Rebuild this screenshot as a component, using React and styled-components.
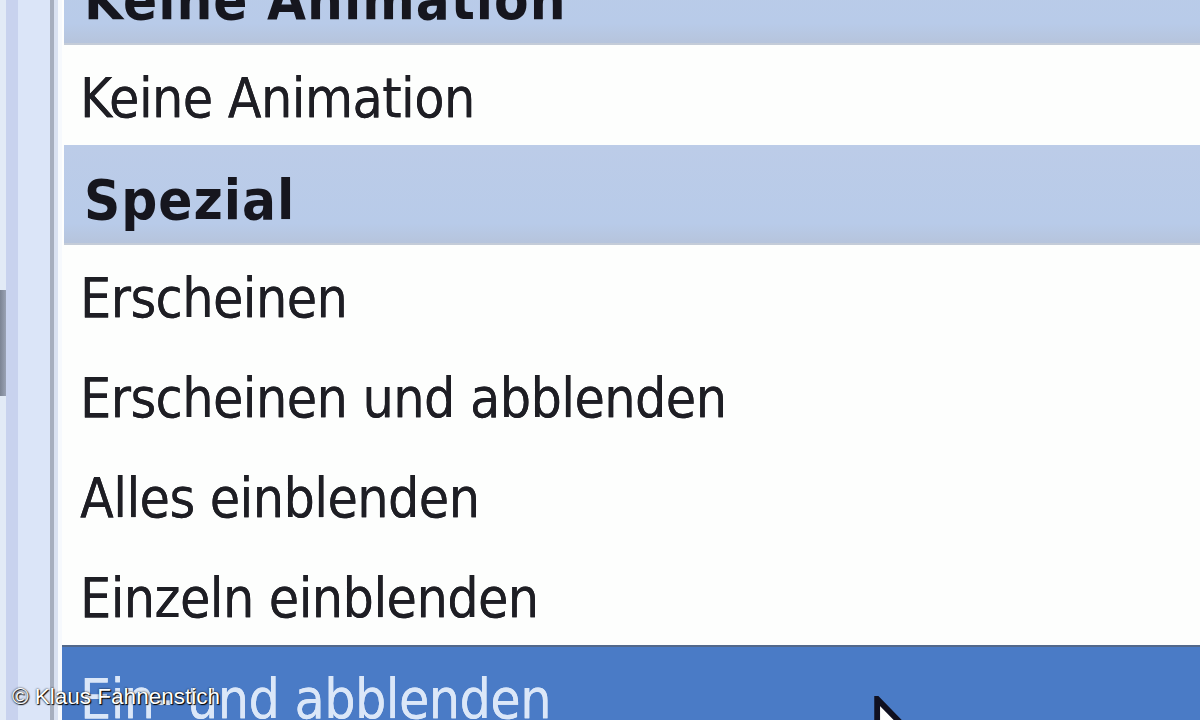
import React from 'react';
import styled, { createGlobalStyle } from 'styled-components';

const GlobalStyle = createGlobalStyle`
  html, body {
    margin: 0;
    padding: 0;
    background: #ffffff;
    overflow: hidden;
  }
`;

const Screen = styled.div`
  position: relative;
  display: flex;
  width: 1200px;
  height: 720px;
  overflow: hidden;
  background: #fdfefe;
  font-family: "DejaVu Sans Condensed", "DejaVu Sans", Verdana, sans-serif;
  font-stretch: condensed;
`;

/* left task pane border: a few vertical bands plus the scrollbar edge */
const Gutter = styled.div`
  display: flex;
  flex: 0 0 62px;
  height: 100%;
`;

const Band = styled.div`
  flex: 0 0 ${p => p.w}px;
  background: ${p => p.color};
  display: flex;
  flex-direction: column;
`;

const ThumbGap = styled.div`
  flex: 0 0 ${p => p.h}px;
`;

const Thumb = styled.div`
  flex: 0 0 106px;
  background: linear-gradient(to right, #7c8494, #9aa2b4);
`;

const List = styled.div`
  flex: 1;
  display: flex;
  flex-direction: column;
  margin-top: -55px;
`;

const GroupHeader = styled.div`
  flex: 0 0 100px;
  box-sizing: border-box;
  display: flex;
  align-items: center;
  margin-left: 2px;
  padding: 10px 0 0 20px;
  background: linear-gradient(to bottom, #bccce8 0%, #b8cbe9 80%, #b6c4dc 100%);
  border-bottom: 2px solid #c4ccd8;
  font-weight: bold;
  font-size: 56px;
  letter-spacing: 1px;
  color: #16161e;
`;

const Item = styled.div`
  flex: 0 0 100px;
  box-sizing: border-box;
  display: flex;
  align-items: center;
  padding: 6px 0 0 18px;
  font-size: 55px;
  letter-spacing: -0.6px;
  color: ${p => (p.selected ? '#dbe7f8' : '#1e1e24')};
  background: ${p => (p.selected ? '#4a7bc6' : '#fdfefd')};
  border-top: ${p => (p.selected ? '2px solid #52688a' : 'none')};
  text-shadow: 0 0 0.6px currentColor;
`;

const Credit = styled.div`
  position: absolute;
  left: 12px;
  top: 684px;
  font-family: "Liberation Sans", Arial, sans-serif;
  font-size: 22.5px;
  color: #ffffff;
  text-shadow: 0 0 2px #000, 1px 1px 1px #000;
`;

const Pointer = styled.svg`
  position: absolute;
  left: 874px;
  top: 696px;
`;

const bands = [
  { w: 6, color: '#e2eaf6' },
  { w: 12, color: '#c8d2ee' },
  { w: 32, color: '#dbe5f8' },
  { w: 4, color: '#a6aebe' },
  { w: 4, color: '#d9e1f1' },
  { w: 4, color: '#f6f9fd' },
];

const rows = [
  { type: 'header', label: 'Keine Animation' },
  { type: 'item', label: 'Keine Animation' },
  { type: 'header', label: 'Spezial' },
  { type: 'item', label: 'Erscheinen' },
  { type: 'item', label: 'Erscheinen und abblenden' },
  { type: 'item', label: 'Alles einblenden' },
  { type: 'item', label: 'Einzeln einblenden' },
  { type: 'item', label: 'Ein- und abblenden', selected: true },
];

export default function App() {
  return (
    <>
      <GlobalStyle />
      <Screen>
        <Gutter>
          {bands.map((b, i) => (
            <Band key={i} w={b.w} color={b.color}>
              {i === 0 && (
                <>
                  <ThumbGap h={290} />
                  <Thumb />
                </>
              )}
            </Band>
          ))}
        </Gutter>
        <List>
          {rows.map((r, i) =>
            r.type === 'header' ? (
              <GroupHeader key={i}>{r.label}</GroupHeader>
            ) : (
              <Item key={i} selected={r.selected}>
                {r.label}
              </Item>
            )
          )}
        </List>
        <Credit>© Klaus Fahnenstich</Credit>
        <Pointer width="70" height="110" viewBox="0 0 12 19">
          <path
            d="M0.5 0.5 L0.5 16.5 L4.3 12.8 L6.8 18.3 L9 17.3 L6.6 11.9 L11.6 11.9 Z"
            fill="#ffffff"
            stroke="#101020"
            strokeWidth="1"
            strokeLinejoin="miter"
          />
        </Pointer>
      </Screen>
    </>
  );
}
